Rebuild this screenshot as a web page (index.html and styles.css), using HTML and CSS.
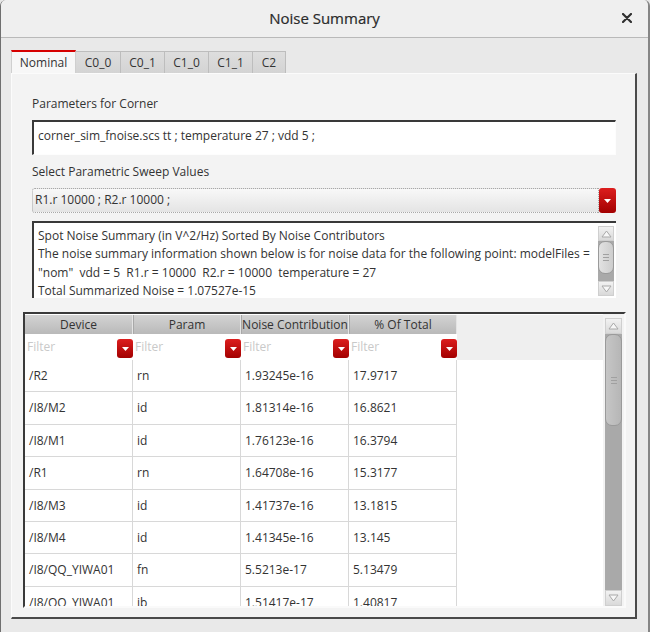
FILE: index.html
```html
<!DOCTYPE html>
<html>
<head>
<meta charset="utf-8">
<link rel="stylesheet" href="styles.css">
</head>
<body>
<div class="window">
  <div class="titlebar">
    <span></span>
    <span class="title">Noise Summary</span>
    <span class="close"><svg width="10" height="10" viewBox="0 0 10 10"><path d="M1 1L9 9M9 1L1 9" stroke="#2f2f2f" stroke-width="2.2" stroke-linecap="round"/></svg></span>
  </div>
  <div class="content">
    <div class="tabs">
      <div class="tab active w65">Nominal</div>
      <div class="tab w45">C0_0</div>
      <div class="tab w44">C0_1</div>
      <div class="tab w44">C1_0</div>
      <div class="tab w44">C1_1</div>
      <div class="tab w33">C2</div>
    </div>
    <div class="panel">
      <div class="label">Parameters for Corner</div>
      <div class="input">corner_sim_fnoise.scs tt ; temperature 27 ; vdd 5 ;</div>
      <div class="label label2">Select Parametric Sweep Values</div>
      <div class="combo">
        <div class="combo-field">R1.r 10000 ; R2.r 10000 ;</div>
        <div class="redbtn combo-btn"><svg width="7" height="4" viewBox="0 0 7 4"><path d="M0 0H7L3.5 4Z" fill="#fff"/></svg></div>
      </div>
      <div class="textarea">
        <div class="ta-text">Spot Noise Summary (in V^2/Hz) Sorted By Noise Contributors
The noise summary information shown below is for noise data for the following point: modelFiles =
"nom"  vdd = 5  R1.r = 10000  R2.r = 10000  temperature = 27
Total Summarized Noise = 1.07527e-15</div>
        <div class="vscroll small">
          <div class="sb-btn"><svg width="11" height="8" viewBox="0 0 11 8"><path d="M1 7L5.5 1L10 7Z" fill="#f7f7f7" stroke="#a9a9a9"/></svg></div>
          <div class="sb-track"><div class="sb-handle h-small"><div class="grip"></div></div></div>
          <div class="sb-btn"><svg width="11" height="8" viewBox="0 0 11 8"><path d="M1 1L5.5 7L10 1Z" fill="#f7f7f7" stroke="#a9a9a9"/></svg></div>
        </div>
      </div>
      <div class="table-frame">
        <div class="grid">
          <div class="row hdr">
            <div class="cell">Device</div>
            <div class="cell">Param</div>
            <div class="cell">Noise Contribution</div>
            <div class="cell">% Of Total</div>
          </div>
          <div class="row filter">
            <div class="cell"><span>Filter</span><span class="redbtn fbtn"><svg width="7" height="4" viewBox="0 0 7 4"><path d="M0 0H7L3.5 4Z" fill="#fff"/></svg></span></div>
            <div class="cell"><span>Filter</span><span class="redbtn fbtn"><svg width="7" height="4" viewBox="0 0 7 4"><path d="M0 0H7L3.5 4Z" fill="#fff"/></svg></span></div>
            <div class="cell"><span>Filter</span><span class="redbtn fbtn"><svg width="7" height="4" viewBox="0 0 7 4"><path d="M0 0H7L3.5 4Z" fill="#fff"/></svg></span></div>
            <div class="cell"><span>Filter</span><span class="redbtn fbtn"><svg width="7" height="4" viewBox="0 0 7 4"><path d="M0 0H7L3.5 4Z" fill="#fff"/></svg></span></div>
          </div>
          <div class="row data"><div class="cell">/R2</div><div class="cell">rn</div><div class="cell">1.93245e-16</div><div class="cell">17.9717</div></div>
          <div class="row data"><div class="cell">/I8/M2</div><div class="cell">id</div><div class="cell">1.81314e-16</div><div class="cell">16.8621</div></div>
          <div class="row data"><div class="cell">/I8/M1</div><div class="cell">id</div><div class="cell">1.76123e-16</div><div class="cell">16.3794</div></div>
          <div class="row data"><div class="cell">/R1</div><div class="cell">rn</div><div class="cell">1.64708e-16</div><div class="cell">15.3177</div></div>
          <div class="row data"><div class="cell">/I8/M3</div><div class="cell">id</div><div class="cell">1.41737e-16</div><div class="cell">13.1815</div></div>
          <div class="row data"><div class="cell">/I8/M4</div><div class="cell">id</div><div class="cell">1.41345e-16</div><div class="cell">13.145</div></div>
          <div class="row data"><div class="cell">/I8/QQ_YIWA01</div><div class="cell">fn</div><div class="cell">5.5213e-17</div><div class="cell">5.13479</div></div>
          <div class="row data"><div class="cell">/I8/OO_YIWA01</div><div class="cell">ib</div><div class="cell">1.51417e-17</div><div class="cell">1.40817</div></div>
        </div>
        <div class="vscroll big">
          <div class="sb-btn"><svg width="11" height="8" viewBox="0 0 11 8"><path d="M1 7L5.5 1L10 7Z" fill="#f7f7f7" stroke="#a9a9a9"/></svg></div>
          <div class="sb-track"><div class="sb-handle h-big"><div class="grip"></div></div></div>
          <div class="sb-btn"><svg width="11" height="8" viewBox="0 0 11 8"><path d="M1 1L5.5 7L10 1Z" fill="#f7f7f7" stroke="#a9a9a9"/></svg></div>
        </div>
      </div>
    </div>
  </div>
</div>
</body>
</html>
```

FILE: styles.css
```css
html, body {
  margin: 0;
  padding: 0;
}
body {
  width: 650px;
  height: 632px;
  overflow: hidden;
  background: #e6e6e6;
  font-family: "Open Sans", "Noto Sans", sans-serif;
  font-size: 12px;
  color: #343434;
}
.window {
  box-sizing: border-box;
  width: 650px;
  height: 632px;
  border-left: 1px solid #6f6f6f;
  border-right: 2px solid #858585;
  border-radius: 6px 6px 0 0;
  background: #e9e9e9;
  overflow: hidden;
}
.titlebar {
  height: 37px;
  border-bottom: 1px solid #b9b9b9;
  background: #efefef;
  display: grid;
  grid-template-columns: 1fr auto 1fr;
  align-items: center;
}
.title {
  font-size: 15px;
  color: #2a2a2a;
  padding-bottom: 1px;
  -webkit-text-stroke: 0.2px #2a2a2a;
}
.close {
  justify-self: end;
  margin-right: 16px;
  display: flex;
  margin-top: -2px;
}
.content {
  padding: 12px 0 0 10px;
}
.tabs {
  display: flex;
  height: 23px;
}
.tab {
  box-sizing: border-box;
  height: 22px;
  margin-top: 1px;
  background: linear-gradient(#dedede, #d3d3d3);
  border-top: 1px solid #bdbdbd;
  border-right: 1px solid #bdbdbd;
  text-align: center;
  line-height: 22px;
  color: #333;
}
.tab.active {
  height: 23px;
  margin-top: 0;
  background: #f7f7f7;
  border-top: 2px solid #d60000;
  border-left: 1px solid #cfcfcf;
  border-right: 1px solid #cfcfcf;
  line-height: 22px;
}
.w65 { width: 65px; }
.w45 { width: 45px; }
.w44 { width: 44px; }
.w33 { width: 33px; }
.panel {
  box-sizing: border-box;
  width: 626px;
  height: 546px;
  background: #f3f3f3;
  border-left: 1px solid #fbfbfb;
  border-top: 1px solid #fbfbfb;
  border-right: 2px solid #4a4a4a;
  border-bottom: 2px solid #4a4a4a;
  padding: 21px 0 0 11px;
}
.label {
  margin-left: 9px;
  height: 17px;
  line-height: 17px;
  color: #333;
}
.label2 {
  margin-top: 8px;
}
.input {
  box-sizing: border-box;
  margin: 8px 0 0 9px;
  width: 584px;
  height: 35px;
  background: #fff;
  border-top: 2px solid #393939;
  border-left: 2px solid #393939;
  border-right: 1px solid #fdfdfd;
  border-bottom: 1px solid #fdfdfd;
  padding-left: 4px;
  line-height: 28px;
  color: #333;
}
.combo {
  margin: 8px 0 0 9px;
  width: 584px;
  height: 25px;
  display: flex;
}
.combo-field {
  flex: 1;
  box-sizing: border-box;
  border: 1px dotted #a8a8a8;
  border-radius: 3px 0 0 3px;
  background: linear-gradient(#f8f8f8, #e4e4e4);
  padding-left: 2px;
  line-height: 22px;
  color: #333;
}
.redbtn {
  background: linear-gradient(#dc1e1e, #a30000);
  border-radius: 3px;
  display: flex;
  align-items: center;
  justify-content: center;
}
.combo-btn {
  width: 17px;
  height: 25px;
}
.textarea {
  box-sizing: border-box;
  margin: 8px 0 0 9px;
  width: 584px;
  height: 77px;
  background: #fff;
  border-top: 2px solid #393939;
  border-left: 2px solid #393939;
  display: flex;
  overflow: hidden;
}
.ta-text {
  flex: 1;
  padding: 4px 0 0 4px;
  white-space: pre;
  line-height: 18.4px;
  overflow: hidden;
  color: #333;
}
.vscroll {
  display: flex;
  flex-direction: column;
  width: 16px;
}
.vscroll.small {
  margin: 3px 2px 2px 0;
  height: 70px;
}
.vscroll.big {
  width: 17px;
  margin: 4px 2px 0 2px;
  height: 288px;
}
.sb-btn {
  height: 15px;
  flex: none;
  background: linear-gradient(#f2f2f2, #d9d9d9);
  border: 1px solid #cfcfcf;
  box-sizing: border-box;
  display: flex;
  align-items: center;
  justify-content: center;
}
.big .sb-btn {
  height: 16px;
}
.sb-track {
  flex: 1;
  background: #a9a9a9;
}
.sb-handle {
  box-sizing: border-box;
  border: 1px solid #9a9a9a;
  border-radius: 7px;
  background: linear-gradient(to right, #d6d6d6, #c2c2c2);
  display: flex;
  align-items: center;
  justify-content: center;
}
.h-small {
  height: 33px;
  background: linear-gradient(to right, #e2e2e2, #cdcdcd);
}
.h-big {
  height: 92px;
  background: linear-gradient(to right, #c6c6c6, #b6b6b6);
}
.grip {
  width: 6px;
  height: 5px;
  border-top: 1px solid #a0a0a0;
  border-bottom: 1px solid #a0a0a0;
  background: linear-gradient(transparent 2px, #a0a0a0 2px, #a0a0a0 3px, transparent 3px);
}
.table-frame {
  box-sizing: border-box;
  margin-top: 14px;
  width: 603px;
  height: 296px;
  border-top: 2px solid #3a3a3a;
  border-left: 2px solid #3a3a3a;
  border-right: 2px solid #fafafa;
  border-bottom: 2px solid #fafafa;
  display: flex;
}
.grid {
  flex: 1;
  background: #fff;
  overflow: hidden;
}
.row {
  display: flex;
}
.cell {
  box-sizing: border-box;
  width: 108px;
  flex: none;
}
.hdr {
  margin-top: 1px;
  height: 19px;
  background: #efefef;
}
.hdr .cell {
  background: linear-gradient(#d3d3d3, #b9b9b9);
  border-right: 1px solid #e4e4e4;
  border-left: 1px solid #a8a8a8;
  text-align: center;
  line-height: 19px;
  color: #333;
}
.hdr .cell:first-child {
  border-left: none;
}
.filter {
  height: 26px;
  background: #efefef;
}
.filter .cell {
  background: #fff;
  display: flex;
  justify-content: space-between;
  align-items: flex-start;
  color: #c9c9c9;
  line-height: 26px;
  padding-left: 2px;
}
.fbtn {
  width: 16px;
  height: 19px;
  margin-top: 5px;
}
.data {
  box-sizing: border-box;
  height: 32.4px;
}
.data .cell {
  border-right: 1px solid #d8d8d8;
  border-bottom: 1px solid #d8d8d8;
  padding-left: 4px;
  line-height: 32px;
  color: #333;
}
```
